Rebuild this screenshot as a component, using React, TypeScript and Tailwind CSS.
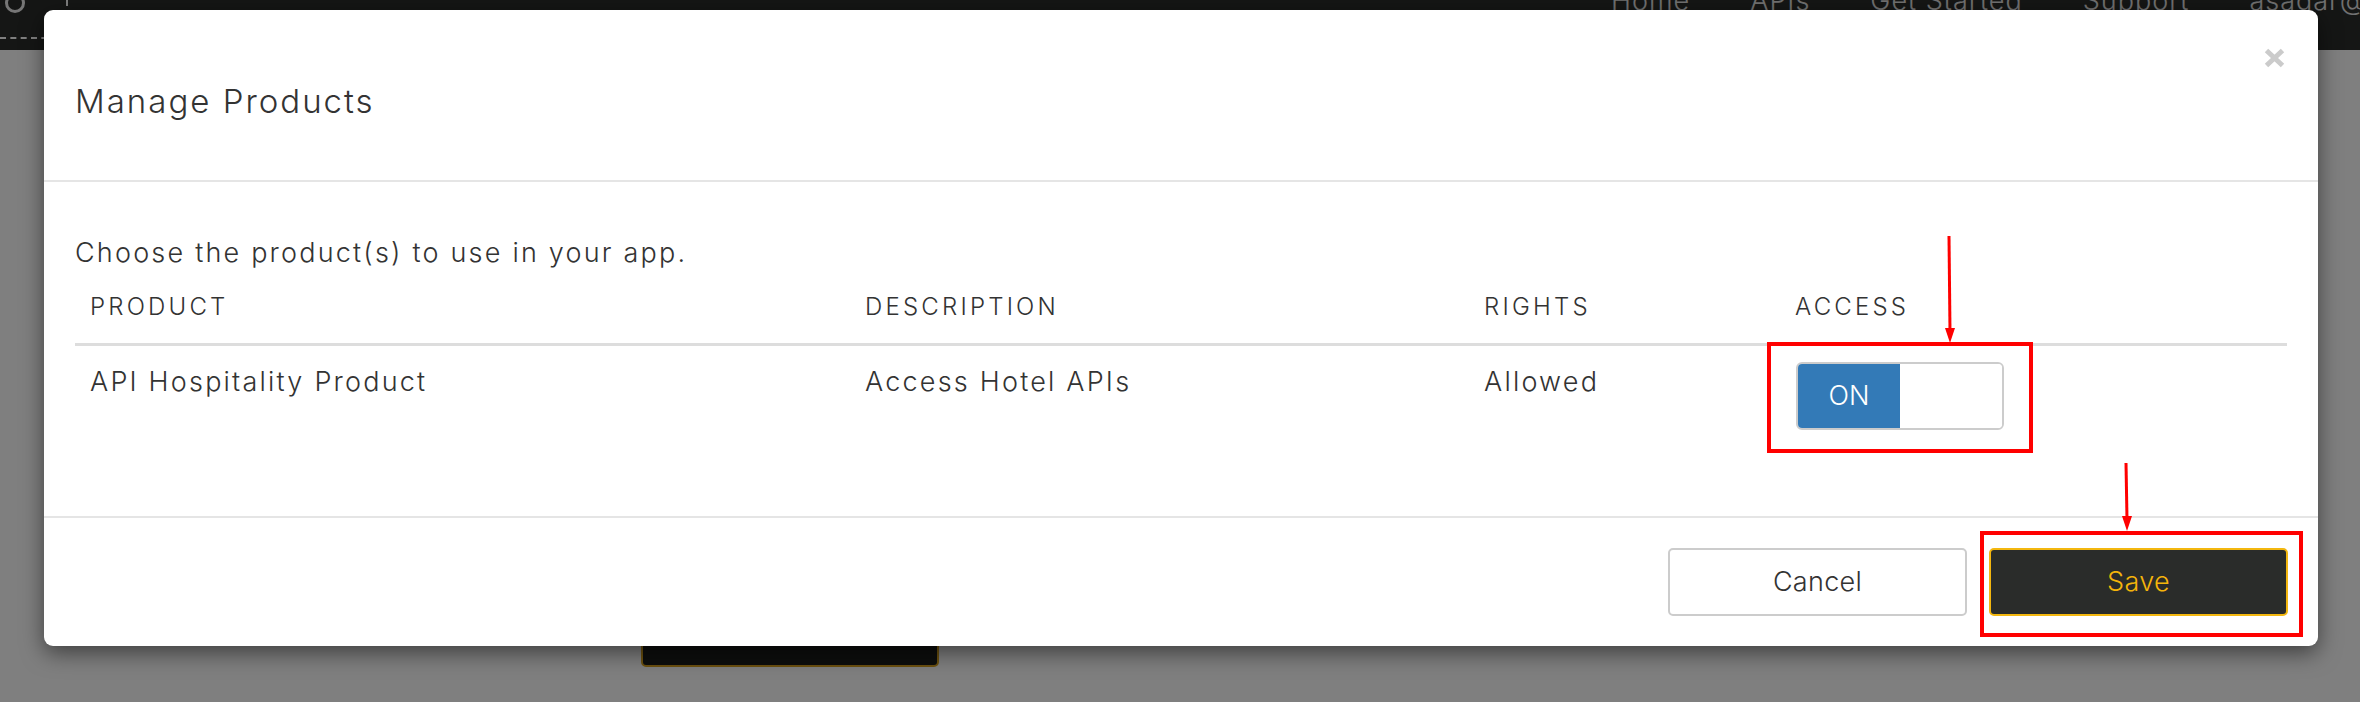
import React from "react";

const font = "font-['Inter','Open_Sans',sans-serif]";

function CloseIcon() {
  return (
    <svg width="21" height="20" viewBox="0 0 21 20">
      <path d="M2.5 2.5 L18.5 17.5 M18.5 2.5 L2.5 17.5" stroke="#cbcbcb" strokeWidth="5" fill="none" />
    </svg>
  );
}

function Arrow({ h }: { h: number }) {
  return (
    <svg width="20" height={h} viewBox={`0 0 20 ${h}`}>
      <line x1="9" y1="0" x2="10" y2={h - 12} stroke="#ff0000" strokeWidth="3" />
      <polygon points={`5,${h - 15} 15,${h - 15} 10,${h}`} fill="#ff0000" />
    </svg>
  );
}

const th = "border-b-[3px] border-[#dddddd] pb-[18px] pl-[15px] pt-[17px] text-[24px] font-[350] leading-[36px] tracking-[3.2px]";
const td = "pl-[15px] pt-[17px] text-[27px] font-[350] leading-[38px] tracking-[2.2px]";

export default function App() {
  return (
    <div className={`relative w-[2360px] h-[702px] overflow-hidden bg-white text-[#333] ${font}`}>
      {/* page behind the dialog */}
      <div className="flex h-[50px] items-start bg-[#2a2c2a]">
        <div className="relative h-[39px] w-[68px] shrink-0 border-b-2 border-r-2 border-dashed border-white">
          <svg className="absolute left-[4px] top-[-8px]" width="22" height="22" viewBox="0 0 22 22">
            <circle cx="11" cy="11" r="8.5" stroke="#ececec" strokeWidth="3" fill="none" />
          </svg>
        </div>
        <nav className="ml-[1543px] mt-[-13px] flex shrink-0 gap-[60px] whitespace-nowrap text-[27px] font-light leading-[27px] tracking-[1px] text-[#e2e2e2]">
          <span>Home</span>
          <span>APIs</span>
          <span>Get Started</span>
          <span>Support</span>
          <span>asagar@example.com</span>
        </nav>
      </div>
      <div className="pl-[641px] pt-[549px]">
        <div className="flex h-[68px] w-[298px] items-center justify-center rounded-[5px] border-2 border-[#d9a31f] bg-[#1b1d1b] text-[27px] text-[#f5b50a]">
          Add Products
        </div>
      </div>

      {/* backdrop */}
      <div className="absolute inset-0 bg-black/50" />

      {/* dialog */}
      <div className="absolute left-[44px] top-[10px] flex h-[636px] w-[2274px] flex-col rounded-[9px] bg-white shadow-[0_7px_22px_rgba(0,0,0,0.5)]">
        <div className="relative flex h-[172px] shrink-0 items-center border-b-2 border-[#e5e5e5] px-[31px] pt-[12px]">
          <h4 className="text-[33px] font-[350] leading-[40px] tracking-[2px] text-[#333]">Manage Products</h4>
          <button className="absolute right-[33px] top-[38px] flex h-[20px] w-[21px] items-center justify-center">
            <CloseIcon />
          </button>
        </div>

        <div className="flex-1 px-[31px] pt-[52px]">
          <p className="text-[27px] font-[350] leading-[38px] tracking-[2.2px]">Choose the product(s) to use in your app.</p>
          <div className="grid grid-cols-[775px_619px_311px_1fr]">
            <div className={th}>PRODUCT</div>
            <div className={th}>DESCRIPTION</div>
            <div className={th}>RIGHTS</div>
            <div className={th}>ACCESS</div>

            <div className={td}>API Hospitality Product</div>
            <div className={td}>Access Hotel APIs</div>
            <div className={td}>Allowed</div>
            <div className="pl-[16px] pt-[16px]">
              <div className="flex h-[68px] w-[208px] overflow-hidden rounded-[6px] border-2 border-[#cccccc]">
                <div className="flex w-[102px] items-center justify-center bg-[#337ab7] text-[27px] font-[350] text-white">ON</div>
                <div className="flex-1 bg-white" />
              </div>
            </div>
          </div>
        </div>

        <div className="flex h-[130px] shrink-0 items-center justify-end gap-[22px] border-t-2 border-[#e5e5e5] px-[30px]">
          <button className="flex h-[68px] w-[299px] items-center justify-center rounded-[5px] border-2 border-[#cccccc] bg-white text-[27px] font-[350] tracking-[0.3px] text-[#333]">
            Cancel
          </button>
          <button className="flex h-[68px] w-[299px] items-center justify-center rounded-[5px] border-2 border-[#f3b70f] bg-[#2a2c2a] text-[27px] font-[350] tracking-[0.3px] text-[#f5b50a]">
            Save
          </button>
        </div>
      </div>

      {/* annotations */}
      <div className="absolute left-[1767px] top-[342px] h-[111px] w-[266px] border-4 border-[#ff0000]" />
      <div className="absolute left-[1980px] top-[531px] h-[106px] w-[323px] border-4 border-[#ff0000]" />
      <div className="absolute left-[1940px] top-[236px]">
        <Arrow h={107} />
      </div>
      <div className="absolute left-[2117px] top-[463px]">
        <Arrow h={68} />
      </div>
    </div>
  );
}
